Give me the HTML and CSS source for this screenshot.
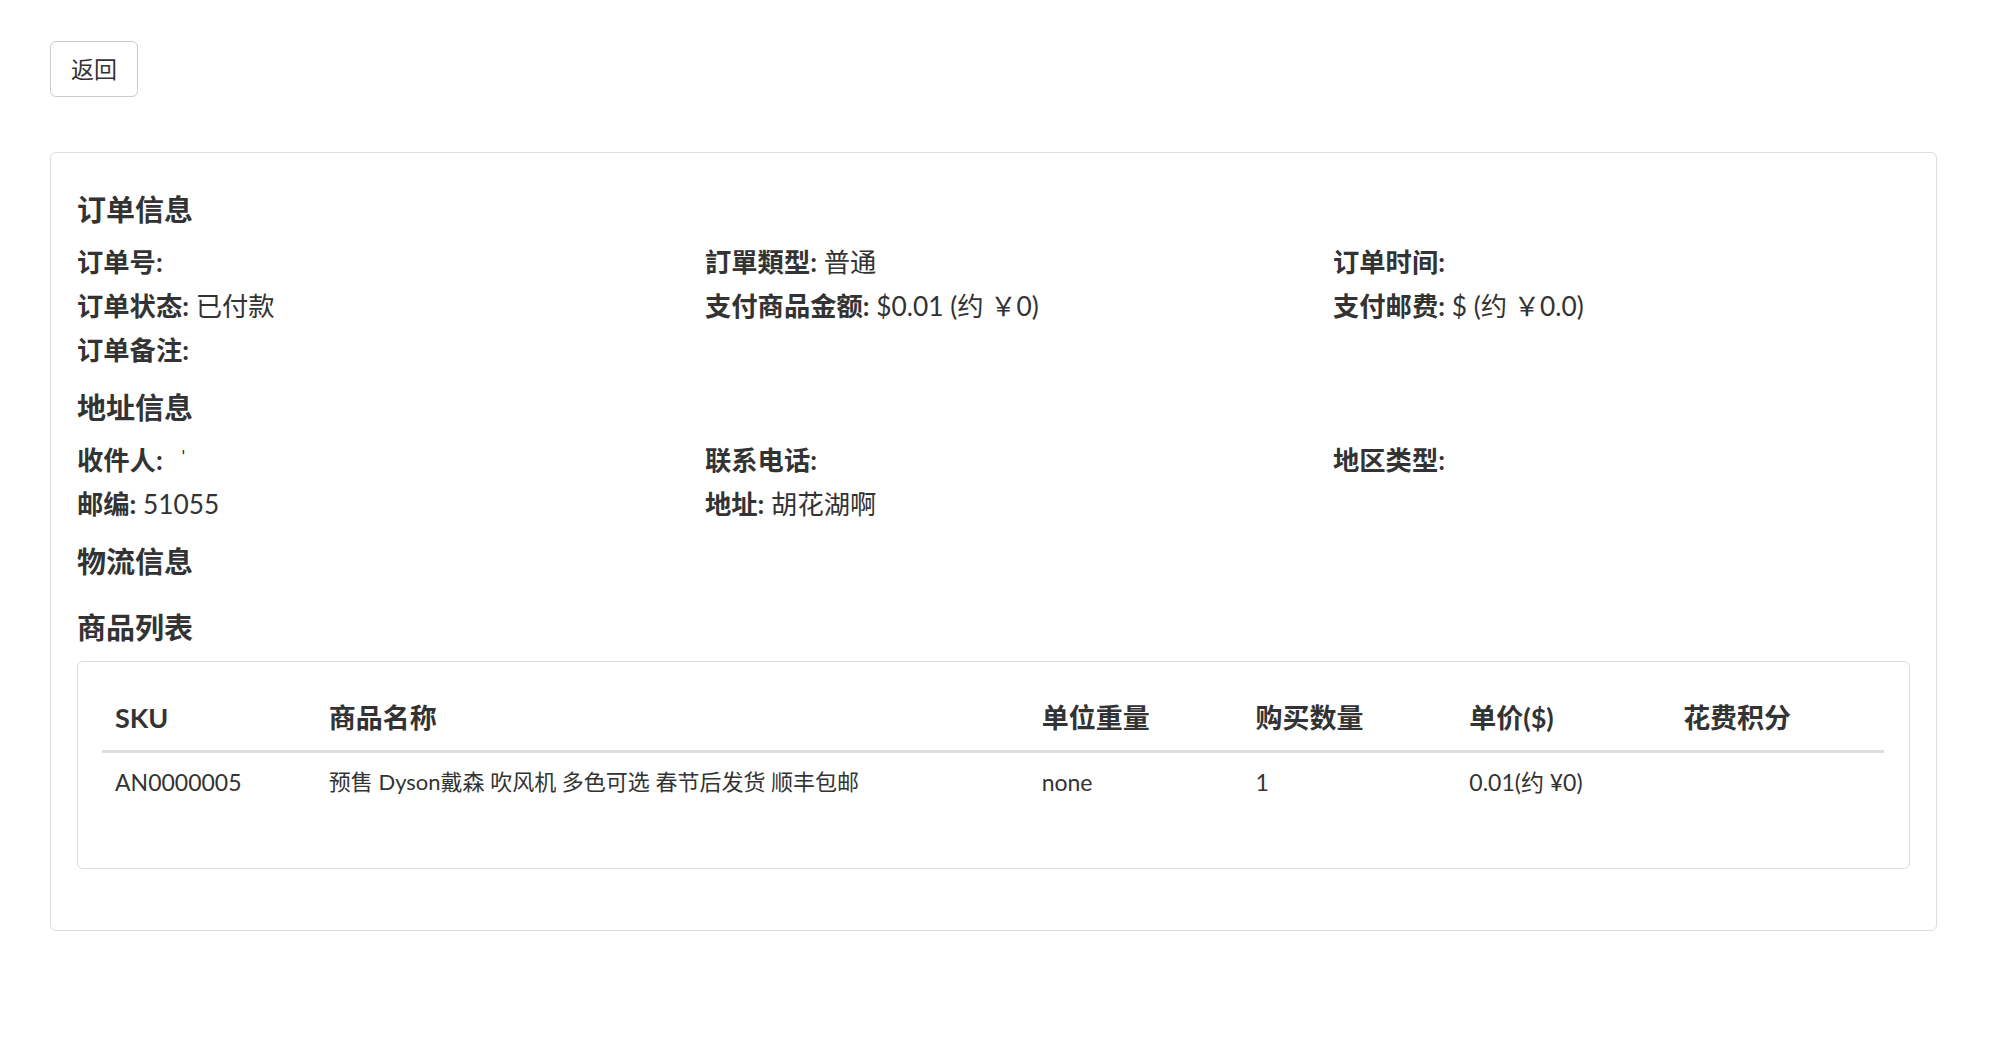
FILE: index.html
```html
<!DOCTYPE html>
<html lang="zh-CN">
<head>
<meta charset="utf-8">
<title>订单详情</title>
<link rel="stylesheet" href="styles.css">
</head>
<body>
<div class="page">
  <button class="btn-back" type="button">返回</button>

  <div class="card">
    <h4 class="section-title first">订单信息</h4>
    <div class="info-grid">
      <div class="info-item"><b>订单号:</b></div>
      <div class="info-item"><b>訂單類型:</b> 普通</div>
      <div class="info-item"><b>订单时间:</b></div>
      <div class="info-item"><b>订单状态:</b> 已付款</div>
      <div class="info-item"><b>支付商品金额:</b> $0.01 (约 ￥0)</div>
      <div class="info-item"><b>支付邮费:</b> $ (约 ￥0.0)</div>
      <div class="info-item"><b>订单备注:</b></div>
    </div>

    <h4 class="section-title">地址信息</h4>
    <div class="info-grid">
      <div class="info-item"><b>收件人:</b> <span class="tick">'</span></div>
      <div class="info-item"><b>联系电话:</b></div>
      <div class="info-item"><b>地区类型:</b></div>
      <div class="info-item"><b>邮编:</b> 51055</div>
      <div class="info-item"><b>地址:</b> 胡花湖啊</div>
    </div>

    <h4 class="section-title">物流信息</h4>

    <h4 class="section-title">商品列表</h4>
    <div class="table-card">
      <table class="goods-table">
        <colgroup>
          <col class="c-narrow"><col class="c-wide"><col class="c-narrow"><col class="c-narrow"><col class="c-narrow"><col class="c-narrow">
        </colgroup>
        <thead>
          <tr>
            <th>SKU</th>
            <th>商品名称</th>
            <th>单位重量</th>
            <th>购买数量</th>
            <th>单价($)</th>
            <th>花费积分</th>
          </tr>
        </thead>
        <tbody>
          <tr>
            <td>AN0000005</td>
            <td class="goods-name">预售 Dyson戴森 吹风机 多色可选 春节后发货 顺丰包邮</td>
            <td>none</td>
            <td>1</td>
            <td>0.01(约 ¥0)</td>
            <td></td>
          </tr>
        </tbody>
      </table>
    </div>
  </div>
</div>
</body>
</html>
```
FILE: styles.css
```css
* {
  box-sizing: border-box;
}

html, body {
  margin: 0;
  padding: 0;
  background: #fff;
}

body {
  font-family: "Lato", "Noto Sans CJK SC", sans-serif;
  color: #333;
}

.page {
  padding: 41px 63px 40px 50px;
}

.btn-back {
  display: block;
  width: 88px;
  height: 56px;
  padding: 0;
  border: 1px solid #ccc;
  border-radius: 6px;
  background: #fff;
  color: #333;
  font-family: "Lato", "Noto Sans CJK SC", sans-serif;
  font-size: 23px;
  line-height: 54px;
  text-align: center;
}

.card {
  display: flex;
  flex-direction: column;
  margin-top: 55px;
  border: 1px solid #ddd;
  border-radius: 6px;
  padding: 37px 26px 61px 26px;
}

.section-title {
  margin: 16px 0 10px 0;
  font-size: 29px;
  line-height: 40px;
  font-weight: 700;
  color: #333;
}

.section-title.first {
  margin-top: 0;
}

.info-grid {
  display: grid;
  grid-template-columns: repeat(3, 1fr);
  column-gap: 51px;
}

.info-item {
  font-size: 26.3px;
  line-height: 44px;
  white-space: nowrap;
}

.info-item b {
  font-weight: 700;
}

.tick {
  display: inline-block;
  margin-left: 12px;
  font-size: 18px;
  vertical-align: top;
  line-height: 36px;
}

.table-card {
  margin-top: 3px;
  border: 1px solid #ddd;
  border-radius: 6px;
  padding: 24px 25px 24px 24px;
}

.goods-table {
  width: 100%;
  border-collapse: collapse;
  table-layout: fixed;
  margin-bottom: 33px;
}

.c-narrow {
  width: 12%;
}

.c-wide {
  width: 40%;
}

.goods-table th {
  text-align: left;
  font-size: 27px;
  font-weight: 700;
  line-height: 36px;
  padding: 14px 13px;
  border-bottom: 3px solid #ddd;
  white-space: nowrap;
}

.goods-table td {
  text-align: left;
  font-size: 23px;
  line-height: 34px;
  padding: 12px 13px;
  white-space: nowrap;
}

.goods-table td.goods-name {
  font-size: 22px;
}
```
